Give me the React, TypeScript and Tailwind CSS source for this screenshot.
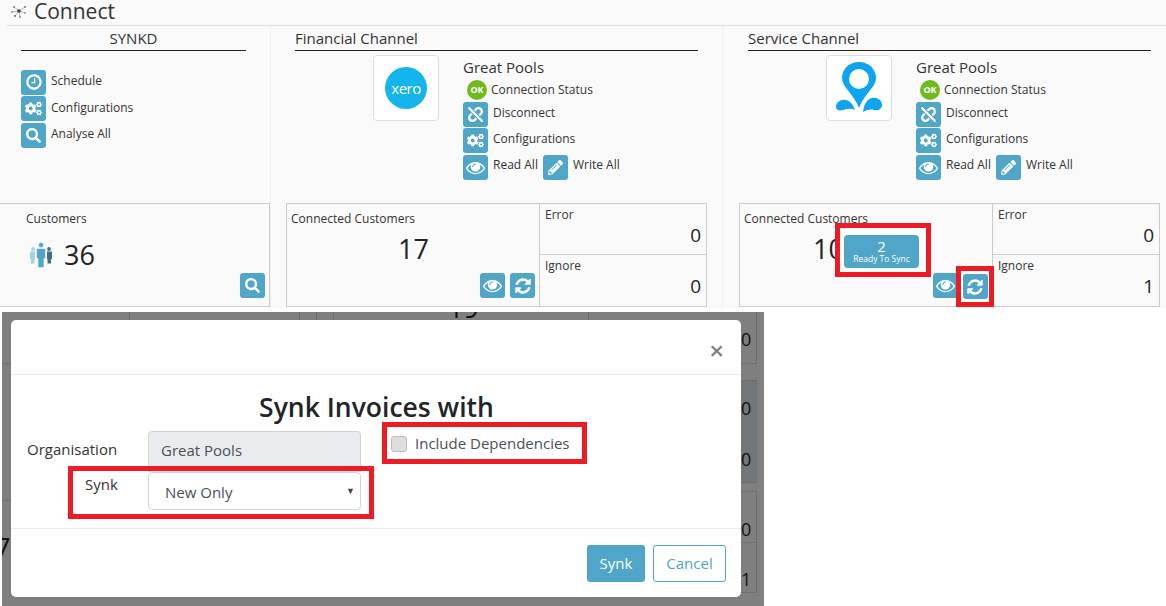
import { FaCogs, FaPencilAlt, FaSearch, FaUnlink } from 'react-icons/fa';
import type { ReactNode } from 'react';

const font = { fontFamily: '"Open Sans", "Noto Sans", sans-serif' };

const Fa4 = ({ d, size = 19 }: { d: string; size?: number }) => (
  <svg width={size} height={size} viewBox="0 0 1792 1792" fill="currentColor">
    <path d={d} />
  </svg>
);

const eyePath =
  'M1664 960q-152-236-381-353 61 104 61 225 0 185-131.5 316.5t-316.5 131.5-316.5-131.5-131.5-316.5q0-121 61-225-229 117-381 353 133 205 333.5 326.5t434.5 121.5 434.5-121.5 333.5-326.5zm-720-384q0-20-14-34t-34-14q-125 0-214.5 89.5t-89.5 214.5q0 20 14 34t34 14 34-14 14-34q0-86 61-147t147-61q20 0 34-14t14-34zm848 384q0 34-20 69-140 230-376.5 368.5t-499.5 138.5-499.5-139-376.5-368q-20-35-20-69t20-69q140-229 376.5-368t499.5-139 499.5 139 376.5 368q20 35 20 69z';
const refreshPath =
  'M1639 1056q0 5-1 7-64 268-268 434.5t-478 166.5q-146 0-282.5-55t-243.5-157l-129 129q-19 19-45 19t-45-19-19-45v-448q0-26 19-45t45-19h448q26 0 45 19t19 45-19 45l-137 137q71 66 161 102t187 36q134 0 250-65t186-179q11-17 53-117 8-23 30-23h192q13 0 22.5 9.5t9.5 22.5zm25-800v448q0 26-19 45t-45 19h-448q-26 0-45-19t-19-45 19-45l138-138q-148-137-349-137-134 0-250 65t-186 179q-11 17-53 117-8 23-30 23h-199q-13 0-22.5-9.5t-9.5-22.5v-7q65-268 270-434.5t480-166.5q146 0 284 55.5t245 156.5l130-129q19-19 45-19t45 19 19 45z';
const clockPath =
  'M1024 544v448q0 14-9 23t-23 9h-320q-14 0-23-9t-9-23v-64q0-14 9-23t23-9h224v-352q0-14 9-23t23-9h64q14 0 23 9t9 23zm416 352q0-148-73-273t-198-198-273-73-273 73-198 198-73 273 73 273 198 198 273 73 273-73 198-198 73-273zm224 0q0 209-103 385.5t-279.5 279.5-385.5 103-385.5-103-279.5-279.5-103-385.5 103-385.5 279.5-279.5 385.5-103 385.5 103 279.5 279.5 103 385.5z';

const IconBtn = ({ children }: { children: ReactNode }) => (
  <span className="flex h-[25px] w-[25px] shrink-0 items-center justify-center rounded-[3px] bg-[#50a6c8] text-white">
    {children}
  </span>
);

const ActionRow = ({
  icon,
  label,
  labelClass = '-mt-[3px]',
  className = '',
}: {
  icon: ReactNode;
  label: string;
  labelClass?: string;
  className?: string;
}) => (
  <div className={`flex h-[26px] items-center gap-[5px] text-[12px] text-[#333] ${className}`}>
    <IconBtn>{icon}</IconBtn>
    <span className={labelClass}>{label}</span>
  </div>
);

const NetworkIcon = () => (
  <svg width="18" height="16" viewBox="0 0 18 16" className="shrink-0">
    <g stroke="#888" strokeWidth="0.6">
      <path d="M9 6 4 2M9 6 15 2M9 6 5 11M9 6 15 8M9 6 10 12M9 6 2 7" />
    </g>
    <circle cx="9" cy="6" r="1.8" fill="#444" />
    <circle cx="4" cy="2" r="1" fill="#777" />
    <circle cx="15" cy="2" r="1" fill="#777" />
    <circle cx="2" cy="7" r="1" fill="#999" />
    <circle cx="5" cy="11" r="1.1" fill="#777" />
    <circle cx="15" cy="8" r="1" fill="#999" />
    <circle cx="10" cy="12" r="0.9" fill="#888" />
  </svg>
);

const PeopleIcon = () => (
  <svg width="24" height="26" viewBox="0 0 24 26" className="shrink-0">
    <g fill="#a5d2e2">
      <circle cx="4" cy="7" r="1.9" />
      <path d="M1 9.5h5v7.5H5.5v4.5H2V17H1z" />
    </g>
    <g fill="#3f6f80">
      <circle cx="20" cy="7" r="1.9" />
      <path d="M18 9.5h5v7.5h-1v4.5h-3.5V17H18z" />
    </g>
    <g fill="#50a6c8" stroke="#fafafa" strokeWidth="0.6">
      <circle cx="12" cy="3" r="2.6" />
      <path d="M7.5 6.5h9v10h-1.5v9h-6v-9H7.5z" />
    </g>
  </svg>
);

const PoolLogo = () => (
  <svg width="46" height="54" viewBox="0 0 46 54">
    <path
      d="M23 1C12 1 6 9 6 17c0 9 11 15 17 30 6-15 17-21 17-30C40 9 34 1 23 1zm0 7a10 10 0 1 1 0 20 10 10 0 0 1 0-20z"
      fill="#0ea5ee"
      fillRule="evenodd"
    />
    <path d="M0 46c0-5 5-8 10-7 4 1 7 4 9 10-4-2-8-1-12 0-4 1-7 0-7-3z" fill="#0ea5ee" />
    <path d="M46 44c0-5-5-8-10-7-5 1-8 6-9 14 3-2 8-3 11-2 4 1 8-1 8-5z" fill="#0ea5ee" />
  </svg>
);

const XeroLogo = () => (
  <span className="flex h-[42px] w-[42px] items-center justify-center rounded-full bg-[#13b5ea] text-[15px] tracking-[-0.5px] text-white">
    xero
  </span>
);

const ChannelColumn = ({ title, logo }: { title: string; logo: ReactNode }) => (
  <div className="flex flex-col">
    <div className="mt-[4px] h-[21px] border-b border-[#222] text-[15px] leading-[16px] text-[#333]">{title}</div>
    <div className="ml-[78px] mt-[4px] flex">
      <div className="flex h-[66px] w-[66px] items-center justify-center rounded-[4px] border border-[#ddd] bg-white">
        {logo}
      </div>
      <div className="ml-[24px] flex flex-col">
        <div className="h-[24px] text-[15px] leading-[24px] text-[#333]">Great Pools</div>
        <div className="ml-[4px] flex h-[22px] items-center gap-[4px] text-[12px] text-[#333]">
          <span className="flex h-[20px] w-[20px] items-center justify-center rounded-full bg-[#6fb91e] text-[9px] font-bold text-white">
            OK
          </span>
          Connection Status
        </div>
        <ActionRow icon={<FaUnlink size={15} />} label="Disconnect" />
        <ActionRow icon={<FaCogs size={17} />} label="Configurations" labelClass="-mt-[2px]" />
        <div className="mt-[1px] flex gap-[5px]">
          <ActionRow icon={<Fa4 d={eyePath} />} label="Read All" labelClass="-mt-[4px]" />
          <ActionRow icon={<FaPencilAlt size={15} />} label="Write All" labelClass="-mt-[4px]" />
        </div>
      </div>
    </div>
  </div>
);

const StatCell = ({ label, value, border }: { label: string; value: string; border?: boolean }) => (
  <div className={`flex h-[51px] flex-col px-[5px] pt-[2px] ${border ? 'border-b border-[#ccc]' : ''}`}>
    <span className="text-[12px] leading-[18px] text-[#333]">{label}</span>
    <span className="-mt-[2px] text-right text-[19px] leading-[26px] text-[#222]">{value}</span>
  </div>
);

const StatsBox = ({ count, value2 }: { count: ReactNode; value2: string }) => (
  <div className="flex h-[104px] w-[421px] border border-[#ccc]">
    <div className="relative w-[253px] border-r border-[#ccc] pl-[4px] pt-[6px]">
      <div className="text-[12px] leading-[18px] text-[#333]">Connected Customers</div>
      {count}
      <div className="absolute bottom-[8px] right-[4px] flex gap-[5px]">
        <IconBtn><Fa4 d={eyePath} /></IconBtn>
        <IconBtn><Fa4 d={refreshPath} size={18} /></IconBtn>
      </div>
    </div>
    <div className="flex-1">
      <StatCell label="Error" value="0" border />
      <StatCell label="Ignore" value={value2} />
    </div>
  </div>
);

const Count = ({ value, className }: { value: string; className: string }) => (
  <div className={`mt-[3px] text-[27px] font-medium leading-[36px] text-[#222] ${className}`}>{value}</div>
);

export default function App() {
  return (
    <div style={font} className="flex h-[606px] w-[1166px] flex-col overflow-hidden bg-white">
      <section className="h-[308px] bg-[#fafafa]">
        <header className="ml-[7px] flex h-[26px] items-center gap-[6px] border-b border-[#ddd] pl-[3px]">
          <NetworkIcon />
          <h1 className="-mt-[3px] text-[21px] leading-[24px] text-[#333]">Connect</h1>
        </header>
        <div className="flex">
          <div className="h-[282px] w-[271px] border-r border-[#f0f0f0]">
            <div className="ml-[21px] mt-[4px] h-[21px] w-[225px] border-b border-[#222] text-center text-[15px] leading-[16px] text-[#333]">
              SYNKD
            </div>
            <div className="ml-[21px] mt-[18px] flex flex-col">
              <ActionRow icon={<Fa4 d={clockPath} size={18} />} label="Schedule" labelClass="-mt-[3px]" />
              <ActionRow icon={<FaCogs size={17} />} label="Configurations" labelClass="-mt-[1px]" />
              <ActionRow icon={<FaSearch size={15} />} label="Analyse All" labelClass="-mt-[3px]" className="mt-[1px]" />
            </div>
            <div className="relative mt-[55px] h-[104px] border-y border-r border-[#ccc] pl-[26px] pt-[6px]">
              <div className="text-[12px] leading-[18px] text-[#333]">Customers</div>
              <div className="ml-[3px] mt-[9px] flex items-center gap-[11px]">
                <PeopleIcon />
                <span className="text-[27px] font-medium leading-[36px] text-[#222]">36</span>
              </div>
              <div className="absolute bottom-[8px] right-[4px]">
                <IconBtn><FaSearch size={15} /></IconBtn>
              </div>
            </div>
          </div>
          <div className="w-[452px] border-r border-[#f0f0f0]">
            <div className="ml-[24px] w-[403px]">
              <ChannelColumn title="Financial Channel" logo={<XeroLogo />} />
            </div>
            <div className="ml-[15px] mt-[23px]">
              <StatsBox count={<Count value="17" className="pl-[107px]" />} value2="0" />
            </div>
          </div>
          <div className="flex-1">
            <div className="ml-[25px] w-[403px]">
              <ChannelColumn title="Service Channel" logo={<PoolLogo />} />
            </div>
            <div className="relative ml-[16px] mt-[23px] w-[421px]">
              <StatsBox count={<Count value="10" className="pl-[69px]" />} value2="1" />
              <div className="absolute left-[96px] top-[20px] h-[54px] w-[96px] border-[5px] border-[#ed1c24] bg-white p-[7px_7px_4px_4px]">
                <div className="flex h-[33px] flex-col items-center justify-center rounded-[4px] bg-[#50a6c8] text-white">
                  <span className="text-[15px] leading-[15px]">2</span>
                  <span className="text-[8.5px] leading-[10px]">Ready To Sync</span>
                </div>
              </div>
              <div className="absolute left-[217px] top-[63px] flex h-[41px] w-[38px] items-center justify-center border-[5px] border-[#ed1c24] bg-white">
                <IconBtn><Fa4 d={refreshPath} size={18} /></IconBtn>
              </div>
            </div>
          </div>
        </div>
      </section>

      <section className="mt-[4px] flex flex-1">
        <div className="relative ml-[2px] h-[294px] w-[762px] overflow-hidden bg-[#7f7f7f] pb-[9px] pl-[9px] pr-[23px] pt-[8px]">
          {/* page content dimmed behind the dialog */}
          <div className="absolute left-[739px] top-[0px] h-[52px] w-[16px] border-b border-r border-[#6e6e6e] text-[18px] leading-[54px] text-[#111]">0</div>
          <div className="absolute left-[739px] top-[68px] h-[52px] w-[16px] border-y border-r border-[#6e6e6e] bg-[#71777a] text-[18px] leading-[54px] text-[#111]">0</div>
          <div className="absolute left-[739px] top-[119px] h-[52px] w-[16px] border-b border-r border-[#6e6e6e] bg-[#71777a] text-[18px] leading-[56px] text-[#111]">0</div>
          <div className="absolute left-[739px] top-[179px] h-[52px] w-[16px] border-y border-r border-[#6e6e6e] text-[18px] leading-[74px] text-[#111]">0</div>
          <div className="absolute left-[739px] top-[230px] h-[51px] w-[16px] border-b border-r border-[#6e6e6e] text-[18px] leading-[74px] text-[#111]">1</div>
          <div className="absolute left-0 top-[51px] h-px w-[9px] bg-[#6e6e6e]" />
          <div className="absolute left-0 top-[188px] h-px w-[9px] bg-[#6e6e6e]" />
          <div className="absolute left-[127px] top-0 h-[8px] w-px bg-[#6e6e6e]" />
          <div className="absolute left-[297px] top-0 h-[8px] w-px bg-[#6e6e6e]" />
          <div className="absolute left-[314px] top-0 h-[8px] w-px bg-[#6e6e6e]" />
          <div className="absolute left-[331px] top-0 h-[8px] w-px bg-[#6e6e6e]" />
          <div className="absolute left-[586px] top-0 h-[8px] w-px bg-[#6e6e6e]" />
          <div className="absolute left-[-7px] top-[218px] text-[27px] font-medium leading-[36px] text-[#111]">7</div>
          <div className="absolute left-[446px] top-[-22px] text-[27px] font-medium leading-[36px] text-[#111]">19</div>

          <div className="relative flex h-[277px] flex-col rounded-[5px] bg-white">
            <div className="flex h-[55px] shrink-0 items-center justify-end border-b border-[#e9ecef] pr-[17px] pt-[6px]">
              <span className="text-[26px] font-semibold leading-none text-[#808080]">×</span>
            </div>
            <div className="relative flex-1">
              <h2 className="mt-[15px] pl-[1px] text-center text-[26.5px] font-semibold leading-[34px] text-[#212529]">
                Synk Invoices with
              </h2>
              <div className="mt-[7px] flex">
                <div className="w-[137px]">
                  <div className="-mt-[2px] flex h-[41px] items-center pl-[16px] text-[15px] text-[#333]">Organisation</div>
                  <div className="mt-[2px] pl-[74px] text-[15px] leading-[24px] text-[#333]">Synk</div>
                </div>
                <div className="w-[213px]">
                  <div className="flex h-[41px] items-center rounded-t-[4px] border border-[#ced4da] bg-[#e9ecef] pb-[2px] pl-[12px] text-[15px] text-[#495057]">
                    Great Pools
                  </div>
                  <div className="flex h-[38px] items-center justify-between rounded-[4px] border border-[#ced4da] bg-white pl-[16px] pr-[5px] pt-[2px] text-[15px] text-[#495057]">
                    New Only
                    <span className="-mt-[2px] text-[9px] text-[#444]">▼</span>
                  </div>
                </div>
              </div>
              {/* the annotation boxes sit over the form */}
              <div className="pointer-events-none absolute left-[57px] top-[91px] h-[53px] w-[306px] border-[5px] border-[#ed1c24]" />
              <div className="absolute left-[371px] top-[47px] flex h-[42px] w-[205px] items-center gap-[8px] border-[5px] border-[#ed1c24] bg-white pl-[4px] pt-[1px] text-[15px] text-[#495057]">
                <span className="h-[16px] w-[16px] rounded-[3px] border border-[#bbb] bg-[#dedede]" />
                Include Dependencies
              </div>
            </div>
            <div className="flex h-[69px] shrink-0 items-start justify-end gap-[8px] border-t border-[#e9ecef] pr-[15px] pt-[16px]">
              <span className="flex h-[37px] w-[58px] items-center justify-center rounded-[3px] bg-[#50a6c8] text-[15px] text-white">Synk</span>
              <span className="flex h-[37px] w-[73px] items-center justify-center rounded-[3px] border border-[#50a6c8] text-[15px] text-[#50a6c8]">Cancel</span>
            </div>
          </div>
        </div>
      </section>
    </div>
  );
}
